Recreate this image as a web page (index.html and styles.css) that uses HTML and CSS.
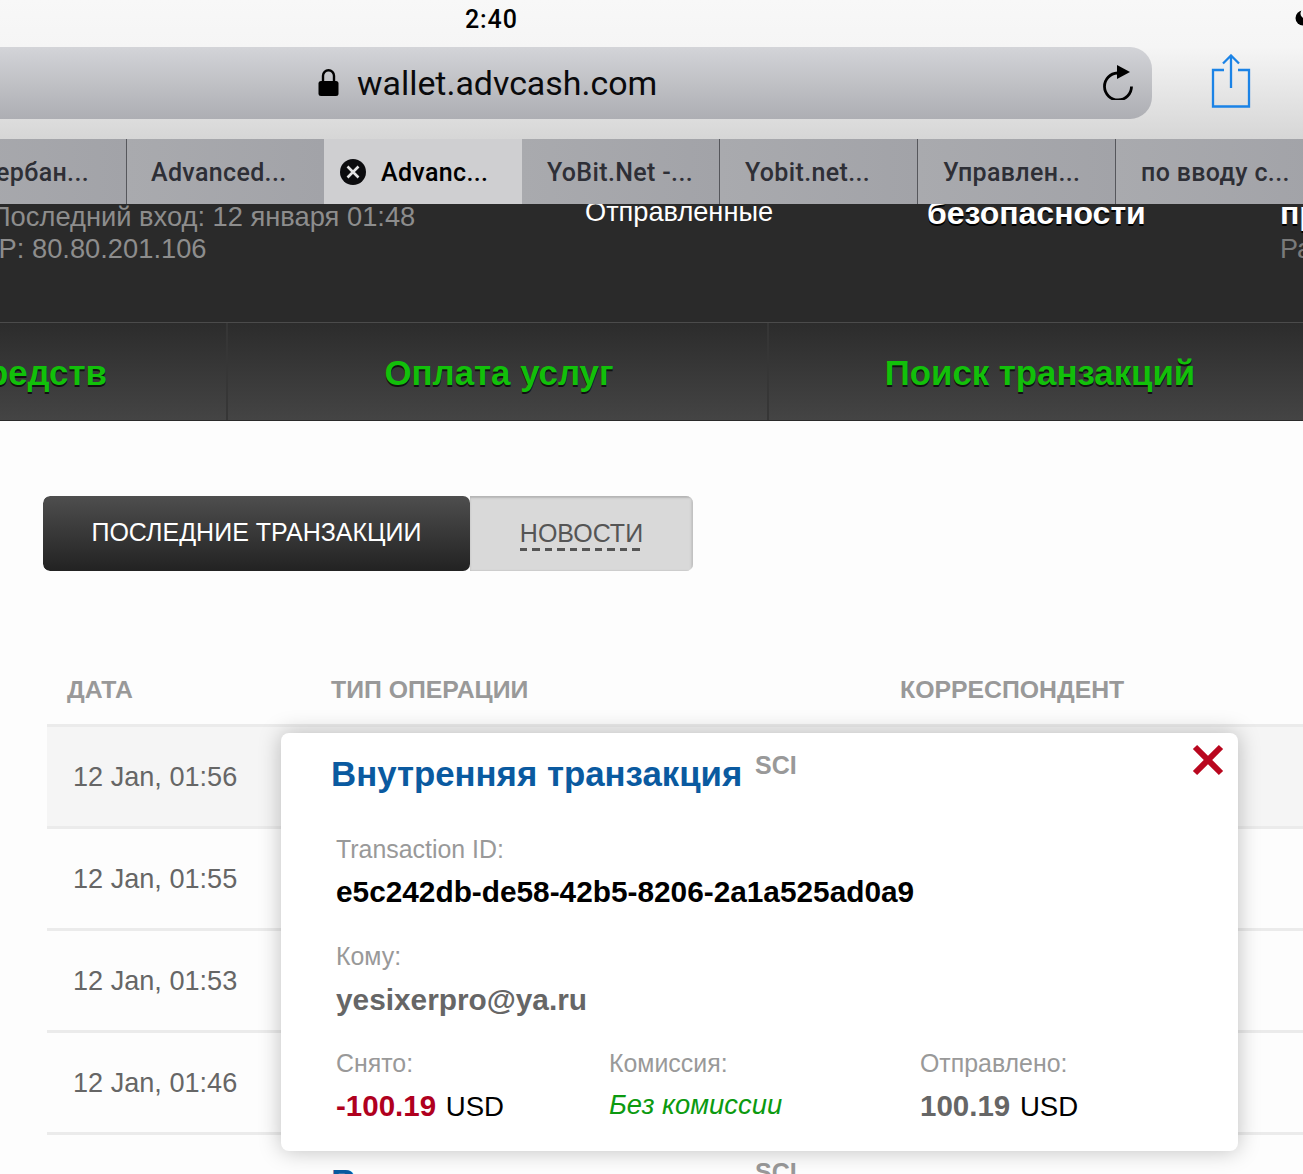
FILE: index.html
```html
<!DOCTYPE html>
<html lang="ru">
<head>
<meta charset="utf-8">
<title>wallet.advcash.com</title>
<link rel="stylesheet" href="styles.css">
</head>
<body>
<div class="page">
  <header class="chrome">
    <div class="status">
      <span class="time">2:40</span>
      <svg class="moon" width="8" height="16" viewBox="0 0 8 16"><circle cx="8" cy="8" r="7.500" fill="#000"/><circle cx="10.500" cy="3.500" r="5" fill="#f7f7f7"/></svg>
    </div>
    <div class="toolbar">
      <div class="urlbar">
        <svg class="lock" width="21" height="27" viewBox="0 0 21 27"><path d="M5 13V6.700a5.500 5.500 0 0 1 11 0V13" fill="none" stroke="#000" stroke-width="2.400"/><rect x="0.500" y="12" width="20" height="15" rx="2.500" fill="#000"/></svg>
        <span class="url">wallet.advcash.com</span>
        <svg class="reload" width="32" height="36" viewBox="0 0 32 36"><path d="M15.500 9A13.500 13.500 0 1 0 29.500 22.500" fill="none" stroke="#000" stroke-width="2.800"/><path d="M15 1L28 8L15 15Z" fill="#000"/></svg>
      </div>
      <svg class="share" width="40" height="54" viewBox="0 0 40 54"><path d="M13 16H2V52.500H38V16H27M20 34V1.500M12 9.500L20 1.500L28 9.500" fill="none" stroke="#1b83e6" stroke-width="2.300"/></svg>
    </div>
    <nav class="tabs">
      <div class="tab tab-first">Сбербан...</div>
      <div class="tab tab-second">Advanced...</div>
      <div class="tab tab-active">
        <svg class="tab-close" width="26" height="26" viewBox="0 0 26 26"><circle cx="13" cy="13" r="13" fill="#0c0c0e"/><path d="M7.500 7.500L18.500 18.500M18.500 7.500L7.500 18.500" stroke="#e4e4e4" stroke-width="2.600"/></svg>
        <span>Advanc...</span>
      </div>
      <div class="tab">YoBit.Net -...</div>
      <div class="tab">Yobit.net...</div>
      <div class="tab">Управлен...</div>
      <div class="tab">по вводу с...</div>
    </nav>
  </header>

  <section class="account">
    <div class="acc-col acc-login">
      <div>Последний вход: 12 января 01:48</div>
      <div>IP: 80.80.201.106</div>
    </div>
    <div class="acc-col acc-sent">Отправленные</div>
    <div class="acc-col acc-strong">безопасности</div>
    <div class="acc-col acc-strong acc-last">
      <div>профиль</div>
      <div class="acc-sub">Работает</div>
    </div>
  </section>

  <nav class="menu">
    <a class="menu-item">Перевод средств</a>
    <a class="menu-item">Оплата услуг</a>
    <a class="menu-item">Поиск транзакций</a>
  </nav>

  <main class="content">
    <div class="switch">
      <div class="switch-on">ПОСЛЕДНИЕ ТРАНЗАКЦИИ</div>
      <div class="switch-off"><span>НОВОСТИ</span></div>
    </div>

    <div class="table">
      <div class="thead">
        <div>ДАТА</div>
        <div>ТИП ОПЕРАЦИИ</div>
        <div>КОРРЕСПОНДЕНТ</div>
      </div>
      <div class="row row-active"><div class="date">12 Jan, 01:56</div></div>
      <div class="row"><div class="date">12 Jan, 01:55</div></div>
      <div class="row"><div class="date">12 Jan, 01:53</div></div>
      <div class="row"><div class="date">12 Jan, 01:46</div></div>
      <div class="row">
        <div class="date"></div>
        <div class="type"><b class="type-name">Внутренняя транзакция</b><span class="type-tag">SCI</span></div>
      </div>
    </div>
  </main>

  <aside class="modal">
    <svg class="modal-close" width="32" height="32" viewBox="0 0 32 32"><path d="M3 3L29 29M29 3L3 29" stroke="#b9071f" stroke-width="6"/></svg>
    <div class="modal-head"><b class="modal-title">Внутренняя транзакция</b><span class="modal-tag">SCI</span></div>
    <div class="modal-body">
      <div class="label">Transaction ID:</div>
      <div class="txid">e5c242db-de58-42b5-8206-2a1a525ad0a9</div>
      <div class="label label-to">Кому:</div>
      <div class="email">yesixerpro@ya.ru</div>
      <div class="amounts">
        <div>
          <div class="label">Снято:</div>
          <div class="money"><b class="minus">-100.19</b> USD</div>
        </div>
        <div>
          <div class="label">Комиссия:</div>
          <div class="nofee">Без комиссии</div>
        </div>
        <div>
          <div class="label">Отправлено:</div>
          <div class="money"><b class="sent">100.19</b> USD</div>
        </div>
      </div>
    </div>
  </aside>
</div>
</body>
</html>
```

FILE: styles.css
```css
* { box-sizing: border-box; }
html, body { margin: 0; padding: 0; }
body { background: #fff; font-family: "Liberation Sans", Arial, sans-serif; }
.page { position: relative; width: 1303px; height: 1174px; overflow: hidden; background: #fdfdfd; }

/* browser chrome */
.chrome { background: linear-gradient(#f8f8f8 0, #f5f5f5 47px, #d6d6d6 139px); font-family: Roboto, sans-serif; }
.status { height: 47px; display: flex; align-items: flex-start; padding: 7px 0 0 465px; justify-content: space-between; }
.time { font-size: 25px; line-height: 26px; font-weight: 500; color: #000; letter-spacing: 0.9px; }
.moon { margin-top: 3px; }
.toolbar { height: 92px; display: flex; align-items: flex-start; }
.urlbar { width: 1162px; height: 72px; margin-left: -10px; border-radius: 0 22px 22px 0; background: linear-gradient(#d3d4d8, #adaeb3); display: flex; align-items: center; padding-left: 328px; }
.lock { margin-right: 18px; margin-top: -1px; flex: none; }
.url { font-size: 33.900px; color: #0a0a0c; flex: 1; }
.reload { margin-right: 18px; margin-top: -2px; flex: none; }
.share { margin: 7px 0 0 59px; flex: none; }

.tabs { display: flex; height: 65px; margin-left: -72px; width: 1400px; background: #a5a6ab; }
.tab { width: 198px; flex: none; display: flex; align-items: center; padding: 1px 0 0 25px; border-right: 1px solid #56575c; font-size: 25px; font-weight: 500; color: #2e2f36; letter-spacing: 0.35px; background: linear-gradient(90deg, #a9aaae, #a2a3a8); }
.tab-first { width: 199px; padding-left: 37px; }
.tab-second { width: 197px; padding-left: 24px; border-right: none; }
.tab-active { background: #cfcfd1; color: #000; padding-left: 16px; border-right: none; }
.tab-close { margin-right: 15px; flex: none; }

/* account band */
.account { height: 118px; background: #2a2a2a; display: flex; overflow: hidden; }
.acc-col { flex: none; }
.acc-login { width: 594px; margin-left: -9px; margin-top: -3px; color: #8d8d8d; font-size: 27.300px; line-height: 32px; }
.acc-sent { width: 342px; margin-top: -8px; color: #fff; font-size: 27.200px; line-height: 32px; }
.acc-strong { width: 353px; margin-top: -8px; color: #fff; font-size: 32px; line-height: 34px; font-weight: 700; text-shadow: 0 2px 0 #000; }
.acc-last { width: 200px; }
.acc-sub { color: #7a7a7a; font-size: 27px; font-weight: 400; text-shadow: none; line-height: 38px; }

/* main menu */
.menu { height: 99px; margin-left: -313px; width: 1700px; display: flex; background: linear-gradient(#2c2c2c, #444); border-top: 1px solid #4b4b4b; border-bottom: 1px solid #2a2a2a; }
.menu-item { width: 541px; flex: none; display: flex; align-items: center; justify-content: center; padding: 3px 0 0 3px; color: #12c00a; font-size: 34.800px; font-weight: 700; text-shadow: 0 2px 0 #111; border-right: 2px solid #363636; }

/* content */
.content { padding: 75px 0 0 43px; }
.switch { width: 650px; height: 75px; display: flex; border-radius: 7px; overflow: hidden; }
.switch-on { width: 427px; background: linear-gradient(#4e4e4e, #222); color: #fff; font-size: 25px; display: flex; align-items: center; justify-content: center; border-radius: 7px; padding-bottom: 2px; }
.switch-off { flex: 1; background: #d9d9d9; box-shadow: inset 0 2px 2px #b5b5b5, inset -2px 0 2px #c6c6c6, inset 0 -1px 1px #cfcfcf; color: #555; font-size: 25px; display: flex; align-items: center; justify-content: center; }
.switch-off span { line-height: 30px; padding: 2px 0 3px; background: repeating-linear-gradient(90deg, #555 0 7px, transparent 7px 12.500px) left bottom / 100% 3px no-repeat; }

.table { margin: 92px 0 0 4px; width: 1300px; }
.thead { display: flex; height: 64px; padding: 9px 0 0 20px; color: #999; font-size: 24.800px; font-weight: 700; line-height: 36px; border-bottom: 3px solid #ebebeb; }
.thead div:nth-child(1) { width: 264px; }
.thead div:nth-child(2) { width: 569px; }
.row { height: 102px; display: flex; border-bottom: 3px solid #ebebeb; padding-left: 26px; }
.row-active { background: #f5f5f5; }
.date { width: 258px; flex: none; font-size: 27.100px; line-height: 32px; padding-top: 34px; color: #666; }
.type { padding-top: 27px; display: flex; align-items: flex-start; }
.type-name { color: #0a5aa0; font-size: 34.800px; line-height: 40px; width: 424px; }
.type-tag { color: #999; font-size: 25px; line-height: 30px; font-weight: 700; margin-top: -5px; }

/* popup */
.modal { position: absolute; left: 281px; top: 733px; width: 957px; height: 418px; background: #fff; border-radius: 8px; box-shadow: 0 0 22px rgba(0,0,0,.25); padding: 21px 0 0 50px; }
.modal-close { position: absolute; right: 14px; top: 11px; }
.modal-head { display: flex; align-items: flex-start; }
.modal-title { color: #0a5aa0; font-size: 34.800px; line-height: 40px; width: 424px; }
.modal-tag { color: #999; font-size: 25px; line-height: 30px; font-weight: 700; margin-top: -4px; }
.modal-body { padding: 40px 0 0 5px; }
.label { color: #999; font-size: 24.900px; line-height: 30px; }
.txid { color: #000; font-size: 29.800px; font-weight: 700; line-height: 34px; margin-top: 11px; }
.label-to { margin-top: 32px; }
.email { color: #666; font-size: 29.800px; font-weight: 700; line-height: 36px; margin-top: 11px; }
.amounts { display: grid; grid-template-columns: 273px 311px 1fr; margin-top: 30px; }
.money { color: #000; font-size: 27.600px; line-height: 36px; margin-top: 10px; }
.minus { color: #b0001e; font-size: 29.500px; margin-right: 2px; }
.sent { color: #666; font-size: 29.500px; margin-right: 2px; }
.nofee { color: #0c9a10; font-size: 27.400px; font-style: italic; line-height: 36px; margin-top: 9px; }
```
